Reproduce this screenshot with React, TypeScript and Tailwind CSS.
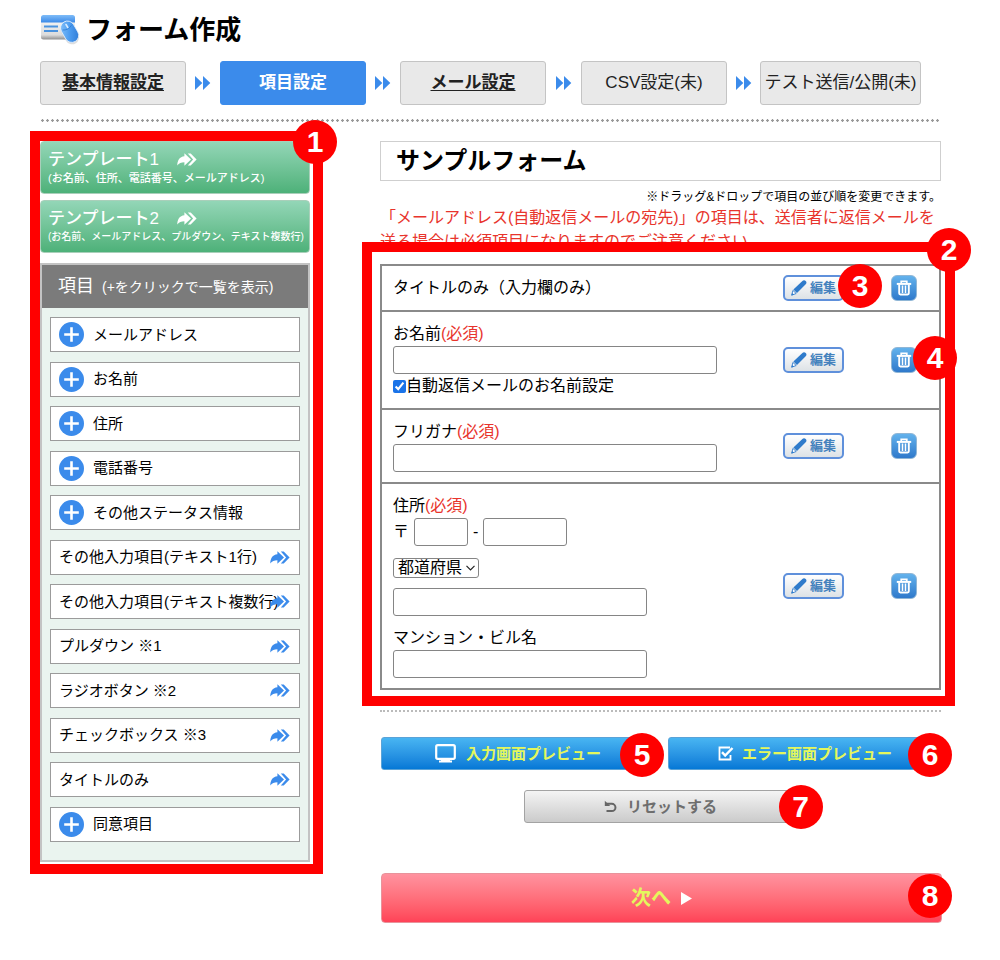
import type { ReactNode } from "react";
import clsx from "clsx";

function Badge({ n, className }: { n: number; className: string }) {
  return (
    <span
      className={clsx(
        "pointer-events-none absolute z-20 flex size-11 items-center justify-center rounded-full bg-[#ff0000] text-[30px] leading-none font-bold text-white",
        className,
      )}
    >
      {n}
    </span>
  );
}

function FormIcon() {
  return (
    <svg width="40" height="32" viewBox="0 0 40 32" aria-hidden="true">
      <defs>
        <linearGradient id="bar" x1="0" y1="0" x2="0" y2="1">
          <stop offset="0" stopColor="#7fbcf8" />
          <stop offset="1" stopColor="#3b8ae8" />
        </linearGradient>
        <linearGradient id="card" x1="0" y1="0" x2="0" y2="1">
          <stop offset="0" stopColor="#f3f3f3" />
          <stop offset="0.75" stopColor="#dcdcdc" />
          <stop offset="1" stopColor="#8f8f8f" />
        </linearGradient>
        <linearGradient id="mouse" x1="0" y1="0" x2="1" y2="1">
          <stop offset="0" stopColor="#8cc6fb" />
          <stop offset="0.5" stopColor="#4c9cf0" />
          <stop offset="1" stopColor="#2a76d2" />
        </linearGradient>
      </defs>
      <path d="M1 7h34v16.500a2 2 0 0 1-2 2H3.500a2.500 2.500 0 0 1-2.500-2.500z" fill="url(#card)" />
      <path d="M1 8.500V3.500A2.500 2.500 0 0 1 3.500 1h29A2.500 2.500 0 0 1 35 3.500V8.500z" fill="url(#bar)" />
      <path d="M4 12.500h14M4 17h14" stroke="#4a93df" strokeWidth="2.200" />
      <rect x="22.500" y="8" width="14" height="23" rx="7" fill="#bdbdbd" opacity="0.500" transform="rotate(-30 29.500 19)" />
      <rect x="22.500" y="6.500" width="14" height="22.500" rx="7" fill="url(#mouse)" stroke="#e8f2fc" strokeWidth="0.800" transform="rotate(-30 29.500 17.500)" />
      <path d="M22.500 16c3.500.4 7-1.200 9-4.800" fill="none" stroke="#2f7ad0" strokeWidth="0.800" />
      <path d="M26 10.500l1.800 3" stroke="#d8ebff" strokeWidth="1.600" strokeLinecap="round" />
    </svg>
  );
}

function StepArrow() {
  return (
    <svg width="16" height="14" viewBox="0 0 16 14" className="mx-auto" fill="#3b8beb" aria-hidden="true">
      <path d="M0 0l7.300 7L0 14zM8 0l7.300 7L8 14z" />
    </svg>
  );
}

function ForwardIcon({ className }: { className?: string }) {
  return (
    <svg width="20" height="13" viewBox="0 0 20 13" className={className} fill="currentColor" aria-hidden="true">
      <path d="M.3 12.400C.3 7.400 2.600 3.700 7.400 3.300V.3l6.600 6.200-6.600 6.200V9.200C4.200 9.200 2 10.200.3 12.400z" />
      <path d="M10.800.4h2.900l5.900 6-5.900 6h-2.900l5.300-6z" />
    </svg>
  );
}

function PlusIcon() {
  return (
    <svg width="25" height="25" viewBox="0 0 25 25" className="shrink-0" aria-hidden="true">
      <circle cx="12.500" cy="12.500" r="12.500" fill="#3b8beb" />
      <path d="M12.500 5.200v14.600M5.200 12.500h14.600" stroke="#fff" strokeWidth="2.600" />
    </svg>
  );
}

function PencilIcon() {
  return (
    <svg width="16" height="16" viewBox="0 0 16 16" className="shrink-0" aria-hidden="true">
      <path d="M11.400 1.100c1-1 2.300-1 3.300 0s1 2.200 0 3.200L6 13 2.400 9.600z" fill="#2f7bcb" />
      <path d="M1.900 10.400l3.300 3.100L.7 15.200z" fill="#fff" stroke="#2f7bcb" strokeWidth="0.900" />
      <path d="M1.300 13L.3 15.600l2.600-1z" fill="#2f7bcb" />
    </svg>
  );
}

function TrashIcon() {
  return (
    <svg width="16" height="16" viewBox="0 0 16 16" className="shrink-0" fill="none" stroke="#fff" aria-hidden="true">
      <path d="M.8 3.900h14.400" strokeWidth="2" />
      <path d="M5.200 3.500V1.300h5.600v2.200" strokeWidth="1.700" />
      <path d="M3.200 4.500v8.800q0 1.200 1.200 1.200h7.200q1.200 0 1.200-1.200V4.500" strokeWidth="1.900" />
      <path d="M6.500 5.500v7.500M9.500 5.500v7.500" strokeWidth="1.500" />
    </svg>
  );
}

const stepBase = "flex h-11 items-center justify-center rounded-[3px] border text-[17px] whitespace-nowrap";
const stepGray = "border-[#c4c4c4] bg-[#e9e9e9] text-[#222]";

function Step({ children, kind }: { children: ReactNode; kind: "link" | "current" | "todo" }) {
  return (
    <a
      href="#"
      aria-current={kind === "current" ? "step" : undefined}
      className={clsx(
        stepBase,
        kind === "current" ? "border-[#3b8beb] bg-[#3b8beb] font-bold text-white" : stepGray,
        kind === "link" && "font-bold underline underline-offset-2",
      )}
    >
      {children}
    </a>
  );
}

function Template({ title, detail, small }: { title: string; detail: string; small?: boolean }) {
  return (
    <button
      type="button"
      className="flex h-[53px] w-full flex-col justify-center rounded-[4px] border border-[#a9cfba] bg-linear-to-b from-[#93d6b7] to-[#4db179] pl-[7px] text-left font-medium whitespace-nowrap text-white"
    >
      <span className="flex items-center gap-[18px] text-[17px] leading-[20px]">
        {title}
        <ForwardIcon />
      </span>
      <span className={clsx("leading-[16px]", small ? "text-[10px]" : "text-[11px]")}>{detail}</span>
    </button>
  );
}

const items: { label: string; group: boolean }[] = [
  { label: "メールアドレス", group: true },
  { label: "お名前", group: true },
  { label: "住所", group: true },
  { label: "電話番号", group: true },
  { label: "その他ステータス情報", group: true },
  { label: "その他入力項目(テキスト1行)", group: false },
  { label: "その他入力項目(テキスト複数行)", group: false },
  { label: "プルダウン ※1", group: false },
  { label: "ラジオボタン ※2", group: false },
  { label: "チェックボックス ※3", group: false },
  { label: "タイトルのみ", group: false },
  { label: "同意項目", group: true },
];

function Row({ children, badge }: { children: ReactNode; badge?: "edit" | "trash" }) {
  return (
    <li className="flex min-h-[46px] items-center">
      <div className="min-w-0 flex-1 py-[10px] pl-[11px]">{children}</div>
      <div className="flex shrink-0 gap-[47px] pr-[22px] pl-4">
        <div className="relative">
          <button
            type="button"
            className="flex h-[26px] w-[61px] items-center justify-center gap-[3px] rounded-[5px] border-2 border-[#5f90db] bg-linear-to-b from-white to-[#dde2e6] text-[13px] font-bold text-[#4482bd]"
          >
            <PencilIcon />
            編集
          </button>
          {badge === "edit" && <Badge n={3} className="-top-[11px] left-[55px]" />}
        </div>
        <div className="relative">
          <button
            type="button"
            aria-label="削除"
            className="flex size-[26px] items-center justify-center rounded-[6px] border border-[#8fb6d6] bg-linear-to-b from-[#63b2ec] to-[#2f79cb]"
          >
            <TrashIcon />
          </button>
          {badge === "trash" && <Badge n={4} className="-top-[11px] left-[22px]" />}
        </div>
      </div>
    </li>
  );
}

const field = "block h-7 rounded-[3px] border border-[#858585] bg-white px-1";

function Required() {
  return <span className="text-[#e8342c]">(必須)</span>;
}

const blueButton =
  "flex h-[33px] w-full items-center justify-center rounded-[3px] border border-[#5aa3d8] bg-linear-to-b from-[#48b5f2] to-[#0478d6] text-[15px] font-bold text-[#e4f75c]";

export default function App() {
  return (
    <div className="bg-white pt-[13px] pr-[59px] pb-9 pl-10 font-['Liberation_Sans','Noto_Sans_CJK_JP',sans-serif] text-base leading-6 text-black">
      <header>
        <h1 className="flex h-[34px] items-center gap-[6px] text-[26px] leading-[34px] font-bold">
          <FormIcon />
          フォーム作成
        </h1>
        <nav
          aria-label="手順"
          className="mt-[14px] mr-[20px] grid grid-cols-[1fr_34px_1fr_34px_1fr_35px_1fr_33px_161px] items-center"
        >
          <Step kind="link">基本情報設定</Step>
          <StepArrow />
          <Step kind="current">項目設定</Step>
          <StepArrow />
          <Step kind="link">メール設定</Step>
          <StepArrow />
          <Step kind="todo">CSV設定(未)</Step>
          <StepArrow />
          <Step kind="todo">テスト送信/公開(未)</Step>
        </nav>
        <div className="mt-[14px] h-[3px] bg-[radial-gradient(circle,#999_1px,transparent_1.5px)] bg-size-[5px_3px]" />
      </header>

      <div className="mt-[19px] flex items-start gap-[70px]">
        <aside className="relative w-[270px] shrink-0">
          <div className="flex flex-col gap-[6px]">
            <Template title="テンプレート1" detail="(お名前、住所、電話番号、メールアドレス)" />
            <Template title="テンプレート2" detail="(お名前、メールアドレス、プルダウン、テキスト複数行)" small />
          </div>
          <section className="mt-[10px] border-2 border-[#c3c3c3] bg-[#eaf4ef]">
            <h2 className="flex h-[43px] items-baseline gap-2 bg-[#7b7b7b] pl-4 text-[18px] leading-[43px] whitespace-nowrap text-white">
              項目
              <span className="text-[14px]">(+をクリックで一覧を表示)</span>
            </h2>
            <ul className="flex min-h-[552px] flex-col justify-between px-2 pt-[9px] pb-[18px]">
              {items.map((item) => (
                <li key={item.label}>
                  <button
                    type="button"
                    className={clsx(
                      "flex h-[35px] w-full items-center border border-[#9b9b9b] bg-white text-left text-[15px] whitespace-nowrap",
                      item.group ? "gap-[9px] pl-2" : "justify-between pr-[9px] pl-2",
                    )}
                  >
                    {item.group && <PlusIcon />}
                    <span className={clsx(!item.group && "w-0 grow")}>{item.label}</span>
                    {!item.group && <ForwardIcon className="shrink-0 text-[#3b8beb]" />}
                  </button>
                </li>
              ))}
            </ul>
          </section>
          <div className="pointer-events-none absolute -top-[10px] -right-[13px] -bottom-[12px] -left-[10px] border-10 border-[#ff0000]" />
          <Badge n={1} className="-top-[21px] -right-[27px]" />
        </aside>

        <main className="min-w-0 flex-1">
          <h2 className="h-10 border border-[#cfcfcf] pl-[15px] text-[24px] leading-[38px] font-bold">
            サンプルフォーム
          </h2>
          <p className="mt-2 text-right text-[12px] leading-[17px]">
            ※ドラッグ&amp;ドロップで項目の並び順を変更できます。
          </p>
          <p className="text-[#e8342c]">
            「メールアドレス(自動返信メールの宛先)」の項目は、送信者に返信メールを送る場合は必須項目になりますのでご注意ください。
          </p>

          <div className="relative mt-[10px]">
            <ul className="divide-y-2 divide-[#8a8a8a] border-2 border-[#8a8a8a] bg-white">
              <Row badge="edit">タイトルのみ（入力欄のみ）</Row>
              <Row badge="trash">
                <label htmlFor="name" className="block">
                  お名前
                  <Required />
                </label>
                <input id="name" type="text" className={clsx(field, "w-full max-w-[324px]")} />
                <label className="flex items-center">
                  <input type="checkbox" defaultChecked className="size-[13px] accent-[#1a73e8]" />
                  自動返信メールのお名前設定
                </label>
              </Row>
              <Row>
                <label htmlFor="kana" className="block">
                  フリガナ
                  <Required />
                </label>
                <input id="kana" type="text" className={clsx(field, "w-full max-w-[324px]")} />
              </Row>
              <Row>
                <div>
                  住所
                  <Required />
                </div>
                <div className="flex items-center gap-[5px]">
                  <label htmlFor="zip1">〒</label>
                  <input id="zip1" type="text" className={clsx(field, "w-[54px]")} />
                  <label htmlFor="zip2">-</label>
                  <input id="zip2" type="text" className={clsx(field, "w-[84px]")} />
                </div>
                <div className="relative mt-3 w-[86px]">
                  <select
                    aria-label="都道府県"
                    className="block h-5 w-full appearance-none rounded-[3px] border border-[#858585] bg-white pl-1 leading-[18px]"
                  >
                    <option>都道府県</option>
                  </select>
                  <svg
                    width="9"
                    height="6"
                    viewBox="0 0 9 6"
                    className="pointer-events-none absolute top-[7px] right-1"
                    fill="none"
                    stroke="#222"
                    strokeWidth="1.200"
                    aria-hidden="true"
                  >
                    <path d="M.5.800l4 4 4-4" />
                  </svg>
                </div>
                <input aria-label="住所" type="text" className={clsx(field, "mt-[10px] w-full max-w-[254px]")} />
                <label htmlFor="building" className="mt-[10px] block">
                  マンション・ビル名
                </label>
                <input id="building" type="text" className={clsx(field, "w-full max-w-[254px]")} />
              </Row>
            </ul>
            <div className="pointer-events-none absolute -top-[22px] -right-[14px] -bottom-[16px] -left-[18px] border-10 border-[#ff0000]" />
            <Badge n={2} className="-top-[36px] -right-[30px]" />
          </div>

          <div className="mt-5 border-t-2 border-dotted border-[#bbb]" />

          <div className="mt-[25px] -mr-px grid grid-cols-2 gap-[13px] pl-px">
            <div className="relative">
              <button type="button" className={clsx(blueButton, "gap-[10px]")}>
                <svg width="21" height="19" viewBox="0 0 21 19" aria-hidden="true">
                  <rect x="1.200" y="1.200" width="18.600" height="13.600" rx="1.500" fill="none" stroke="#fff" strokeWidth="2.200" />
                  <path d="M6 15h9v1.500h2V18.500H4V16.500h2z" fill="#fff" />
                </svg>
                入力画面プレビュー
              </button>
              <Badge n={5} className="-top-[4px] -right-[9px]" />
            </div>
            <div className="relative">
              <button type="button" className={clsx(blueButton, "gap-2")}>
                <svg width="16" height="15" viewBox="0 0 16 15" fill="none" stroke="#fff" aria-hidden="true">
                  <path d="M12 1.500H1.500v12h11V9" strokeWidth="1.800" />
                  <path d="M4 6.200l3.200 3.300L14.500 2" strokeWidth="2.500" />
                </svg>
                エラー画面プレビュー
              </button>
              <Badge n={6} className="-top-[4px] -right-[10px]" />
            </div>
          </div>

          <div className="relative mx-auto mt-5 w-[274px]">
            <button
              type="button"
              className="flex h-[33px] w-full items-center justify-center gap-[10px] rounded-[3px] border border-[#a3a3a3] bg-linear-to-b from-[#f4f4f4] to-[#cbcbcb] text-[15px] font-bold text-[#6e6e6e]"
            >
              <svg width="13" height="13" viewBox="0 0 13 13" fill="none" stroke="#666" aria-hidden="true">
                <path d="M2 3.800h5.800a3.600 3.600 0 0 1 0 7.300H2.500" strokeWidth="2" />
                <path d="M.8.700v5.200h5.400z" fill="#666" stroke="none" />
              </svg>
              リセットする
            </button>
            <Badge n={7} className="-top-[5px] -right-[25px]" />
          </div>

          <div className="relative mt-[50px] -mr-px pl-px">
            <button
              type="button"
              className="flex h-[50px] w-full items-center justify-center gap-[10px] rounded-[4px] border border-[#e8939b] bg-linear-to-b from-[#ff929f] to-[#ff4257] text-[20px] font-bold text-[#e4f75c]"
            >
              次へ
              <svg width="11" height="13" viewBox="0 0 11 13" fill="#fff" aria-hidden="true">
                <path d="M0 0l11 6.500L0 13z" />
              </svg>
            </button>
            <Badge n={8} className="top-[1px] -right-[10px]" />
          </div>
        </main>
      </div>
    </div>
  );
}
